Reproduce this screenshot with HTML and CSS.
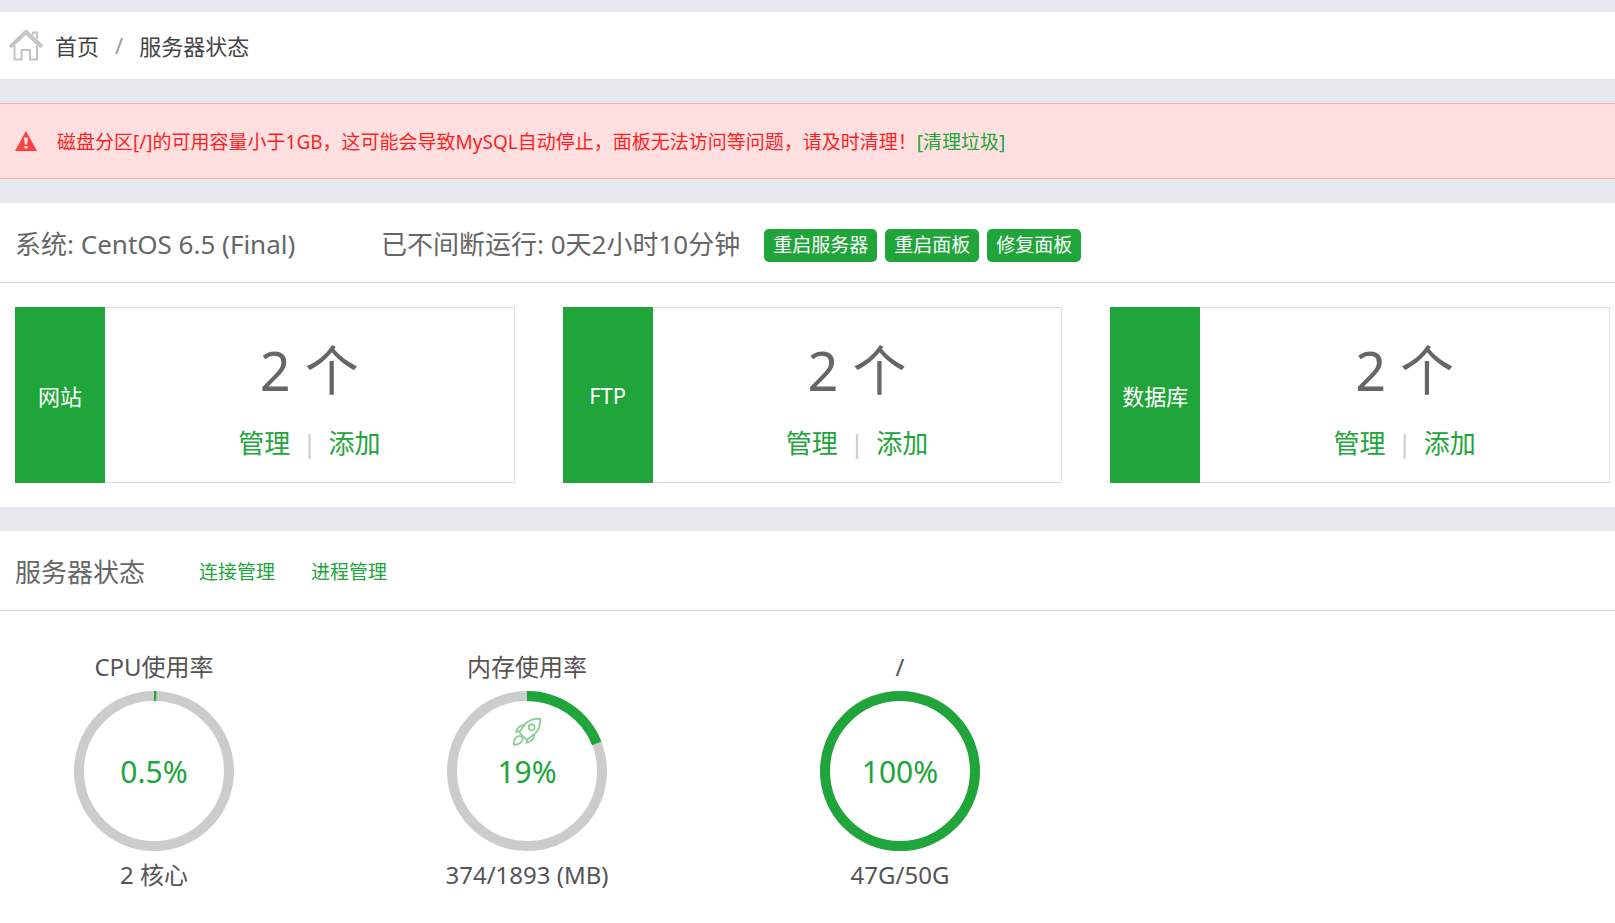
FILE: index.html
```html
<!DOCTYPE html>
<html lang="zh-CN">
  <head>
    <meta charset="utf-8">
    <title>服务器状态</title>
    <link rel="stylesheet" href="styles.css">
  </head>
  <body>
    <nav class="crumbs">
      <svg class="icon-home" viewBox="0 0 34 34" aria-hidden="true">
        <path d="M24 7 V4.5 H28 V11" />
        <path d="M1 18 L17 2.5 L33 17.5 L31.5 19 L17 5.5 L2.5 19 Z" />
        <path d="M5.5 17.5 V31.5 H12.5 V22 H21 V31.5 H28 V17.5" />
      </svg>
      <a href="#">首页</a>
      <span class="slash">/</span>
      <a href="#">服务器状态</a>
    </nav>

    <div class="alert">
      <svg class="icon-warn" viewBox="0 0 22 20" aria-hidden="true">
        <path class="tri" d="M11 0 L22 20 H0 Z" />
        <path class="mark" d="M9 6.5 H13 L12.2 13.5 H9.8 Z M9.5 15 H12.5 V17.5 H9.5 Z" />
      </svg>
      <p>磁盘分区[/]的可用容量小于1GB，这可能会导致MySQL自动停止，面板无法访问等问题，请及时清理！<a href="#">[清理垃圾]</a></p>
    </div>

    <section class="panel">
      <header class="panel-head">
        <span class="system">系统: CentOS 6.5 (Final)</span>
        <span class="uptime">已不间断运行: 0天2小时10分钟</span>
        <div class="buttons">
          <button type="button">重启服务器</button>
          <button type="button">重启面板</button>
          <button type="button">修复面板</button>
        </div>
      </header>
      <div class="cards">
        <div class="card">
          <div class="card-name">网站</div>
          <div class="card-body">
            <div class="count">2 个</div>
            <div class="links"><a href="#">管理</a><span>|</span><a href="#">添加</a></div>
          </div>
        </div>
        <div class="card">
          <div class="card-name">FTP</div>
          <div class="card-body">
            <div class="count">2 个</div>
            <div class="links"><a href="#">管理</a><span>|</span><a href="#">添加</a></div>
          </div>
        </div>
        <div class="card">
          <div class="card-name">数据库</div>
          <div class="card-body">
            <div class="count">2 个</div>
            <div class="links"><a href="#">管理</a><span>|</span><a href="#">添加</a></div>
          </div>
        </div>
      </div>
    </section>

    <section class="panel status">
      <header class="panel-head">
        <h2>服务器状态</h2>
        <div class="head-links">
          <a href="#">连接管理</a>
          <a href="#">进程管理</a>
        </div>
      </header>
      <ul class="gauges">
        <li>
          <h3>CPU使用率</h3>
          <div class="gauge">
            <svg class="ring" viewBox="0 0 160 160" aria-hidden="true">
              <circle class="track" cx="80" cy="80" r="75" />
              <circle class="value" cx="80" cy="80" r="75" pathLength="100" stroke-dasharray="0.5 100" />
            </svg>
            <span class="percent">0.5%</span>
          </div>
          <p>2 核心</p>
        </li>
        <li>
          <h3>内存使用率</h3>
          <div class="gauge">
            <svg class="ring" viewBox="0 0 160 160" aria-hidden="true">
              <circle class="track" cx="80" cy="80" r="75" />
              <circle class="value" cx="80" cy="80" r="75" pathLength="100" stroke-dasharray="19 100" />
            </svg>
            <svg class="icon-rocket" viewBox="0 0 84 84" aria-hidden="true">
              <path d="M82 2 C64 2 48 5 37 17 L22 38 C20 41 20 44 22 47 L37 62 C40 65 44 65 47 62 L66 47 C79 36 82 20 82 2 Z" />
              <circle cx="56" cy="28" r="9" />
              <path d="M35 20 C23 22 12 29 9 42 L21 39" />
              <path d="M64 49 C64 61 56 71 40 75 L44 64" />
              <path d="M3 81 C2 70 5 60 14 55 C20 52 27 56 29 62 C30 72 17 80 3 81 Z" />
            </svg>
            <span class="percent">19%</span>
          </div>
          <p>374/1893 (MB)</p>
        </li>
        <li>
          <h3>/</h3>
          <div class="gauge">
            <svg class="ring" viewBox="0 0 160 160" aria-hidden="true">
              <circle class="track" cx="80" cy="80" r="75" />
              <circle class="value" cx="80" cy="80" r="75" pathLength="100" stroke-dasharray="100 100" />
            </svg>
            <span class="percent">100%</span>
          </div>
          <p>47G/50G</p>
        </li>
      </ul>
    </section>
  </body>
</html>
```
FILE: styles.css
```css
* {
  box-sizing: border-box;
}

body {
  display: flex;
  flex-direction: column;
  gap: 24px;
  min-height: 100vh;
  margin: 0;
  padding-top: 12px;
  background-color: #e5e8ed;
  color: #666;
  font-family: "Noto Sans", "Noto Sans CJK SC", sans-serif;
}

h2,
h3,
p,
ul {
  margin: 0;
  padding: 0;
  font-weight: normal;
}

a {
  color: #20a53a;
  text-decoration: none;
}

/* breadcrumb */
.crumbs {
  display: flex;
  align-items: center;
  height: 67px;
  padding: 0 0 2px 9px;
  background-color: #fff;
  font-size: 22px;
}

.crumbs a {
  color: #444;
}

.slash {
  margin: 0 16px;
  color: #999;
}

.icon-home {
  width: 34px;
  height: 34px;
  margin-right: 12px;
  fill: none;
  stroke: #c4c4c4;
  stroke-width: 2;
  stroke-linejoin: round;
}

/* disk warning */
.alert {
  display: flex;
  align-items: center;
  height: 76px;
  padding-left: 15px;
  border-top: 1px solid #ffa8a8;
  border-bottom: 1px solid #ffa8a8;
  background-color: #ffdfdf;
  color: #ff1f1f;
  font-size: 19px;
}

.icon-warn {
  width: 22px;
  height: 20px;
  margin-right: 20px;
}

.tri {
  fill: #ff4040;
}

.mark {
  fill: #ffdfdf;
}

.panel {
  background-color: #fff;
}

.panel-head {
  display: flex;
  align-items: center;
  height: 80px;
  padding-left: 15px;
  border-bottom: 1px solid #ddd;
  font-size: 26px;
  white-space: nowrap;
}

.system {
  width: 366px;
}

.buttons {
  display: flex;
  gap: 8px;
  margin: 6px 0 0 24px;
}

button {
  height: 33px;
  padding: 0 9px;
  border: 0;
  border-radius: 5px;
  background-color: #20a53a;
  color: #fff;
  font-family: inherit;
  font-size: 19px;
  line-height: 33px;
}

/* counters */
.cards {
  display: grid;
  grid-template-columns: repeat(3, 1fr);
  gap: 48px;
  padding: 24px 5px 24px 15px;
}

.card {
  display: flex;
  height: 176px;
}

.card-name {
  display: flex;
  align-items: center;
  justify-content: center;
  width: 90px;
  background-color: #20a53a;
  color: #fff;
  font-size: 22px;
}

.card-body {
  flex: 1;
  padding-top: 25px;
  border: 1px solid #ddd;
  border-left: 0;
  text-align: center;
}

.count {
  font-size: 54px;
  line-height: 74px;
}

.links {
  font-size: 26px;
  line-height: 72px;
}

.links span {
  margin: 0 12px;
  color: #ccc;
}

/* server status */
.status {
  flex: 1;
}

h2 {
  font-size: 26px;
}

.head-links {
  display: flex;
  gap: 36px;
  margin-left: 54px;
  font-size: 19px;
}

.gauges {
  display: flex;
  gap: 193px;
  padding: 38px 0 24px 64px;
  list-style: none;
  color: #555;
  font-size: 24px;
  text-align: center;
}

.gauges li {
  width: 180px;
}

h3,
.gauges p {
  font-size: 24px;
  line-height: 36px;
}

h3 {
  margin-bottom: 6px;
}

.gauges p {
  margin-top: 6px;
}

.gauge {
  position: relative;
  display: flex;
  align-items: center;
  justify-content: center;
  height: 160px;
}

.ring {
  width: 160px;
  height: 160px;
  fill: none;
  stroke-width: 10;
  transform: rotate(-90deg);
}

.track {
  stroke: #ccc;
}

.value {
  stroke: #20a53a;
}

.icon-rocket {
  position: absolute;
  top: 27px;
  left: 76px;
  width: 28px;
  height: 28px;
  fill: none;
  stroke: #84cc92;
  stroke-width: 5;
  stroke-linejoin: round;
}

.percent {
  position: absolute;
  color: #20a53a;
  font-size: 30px;
}
```
